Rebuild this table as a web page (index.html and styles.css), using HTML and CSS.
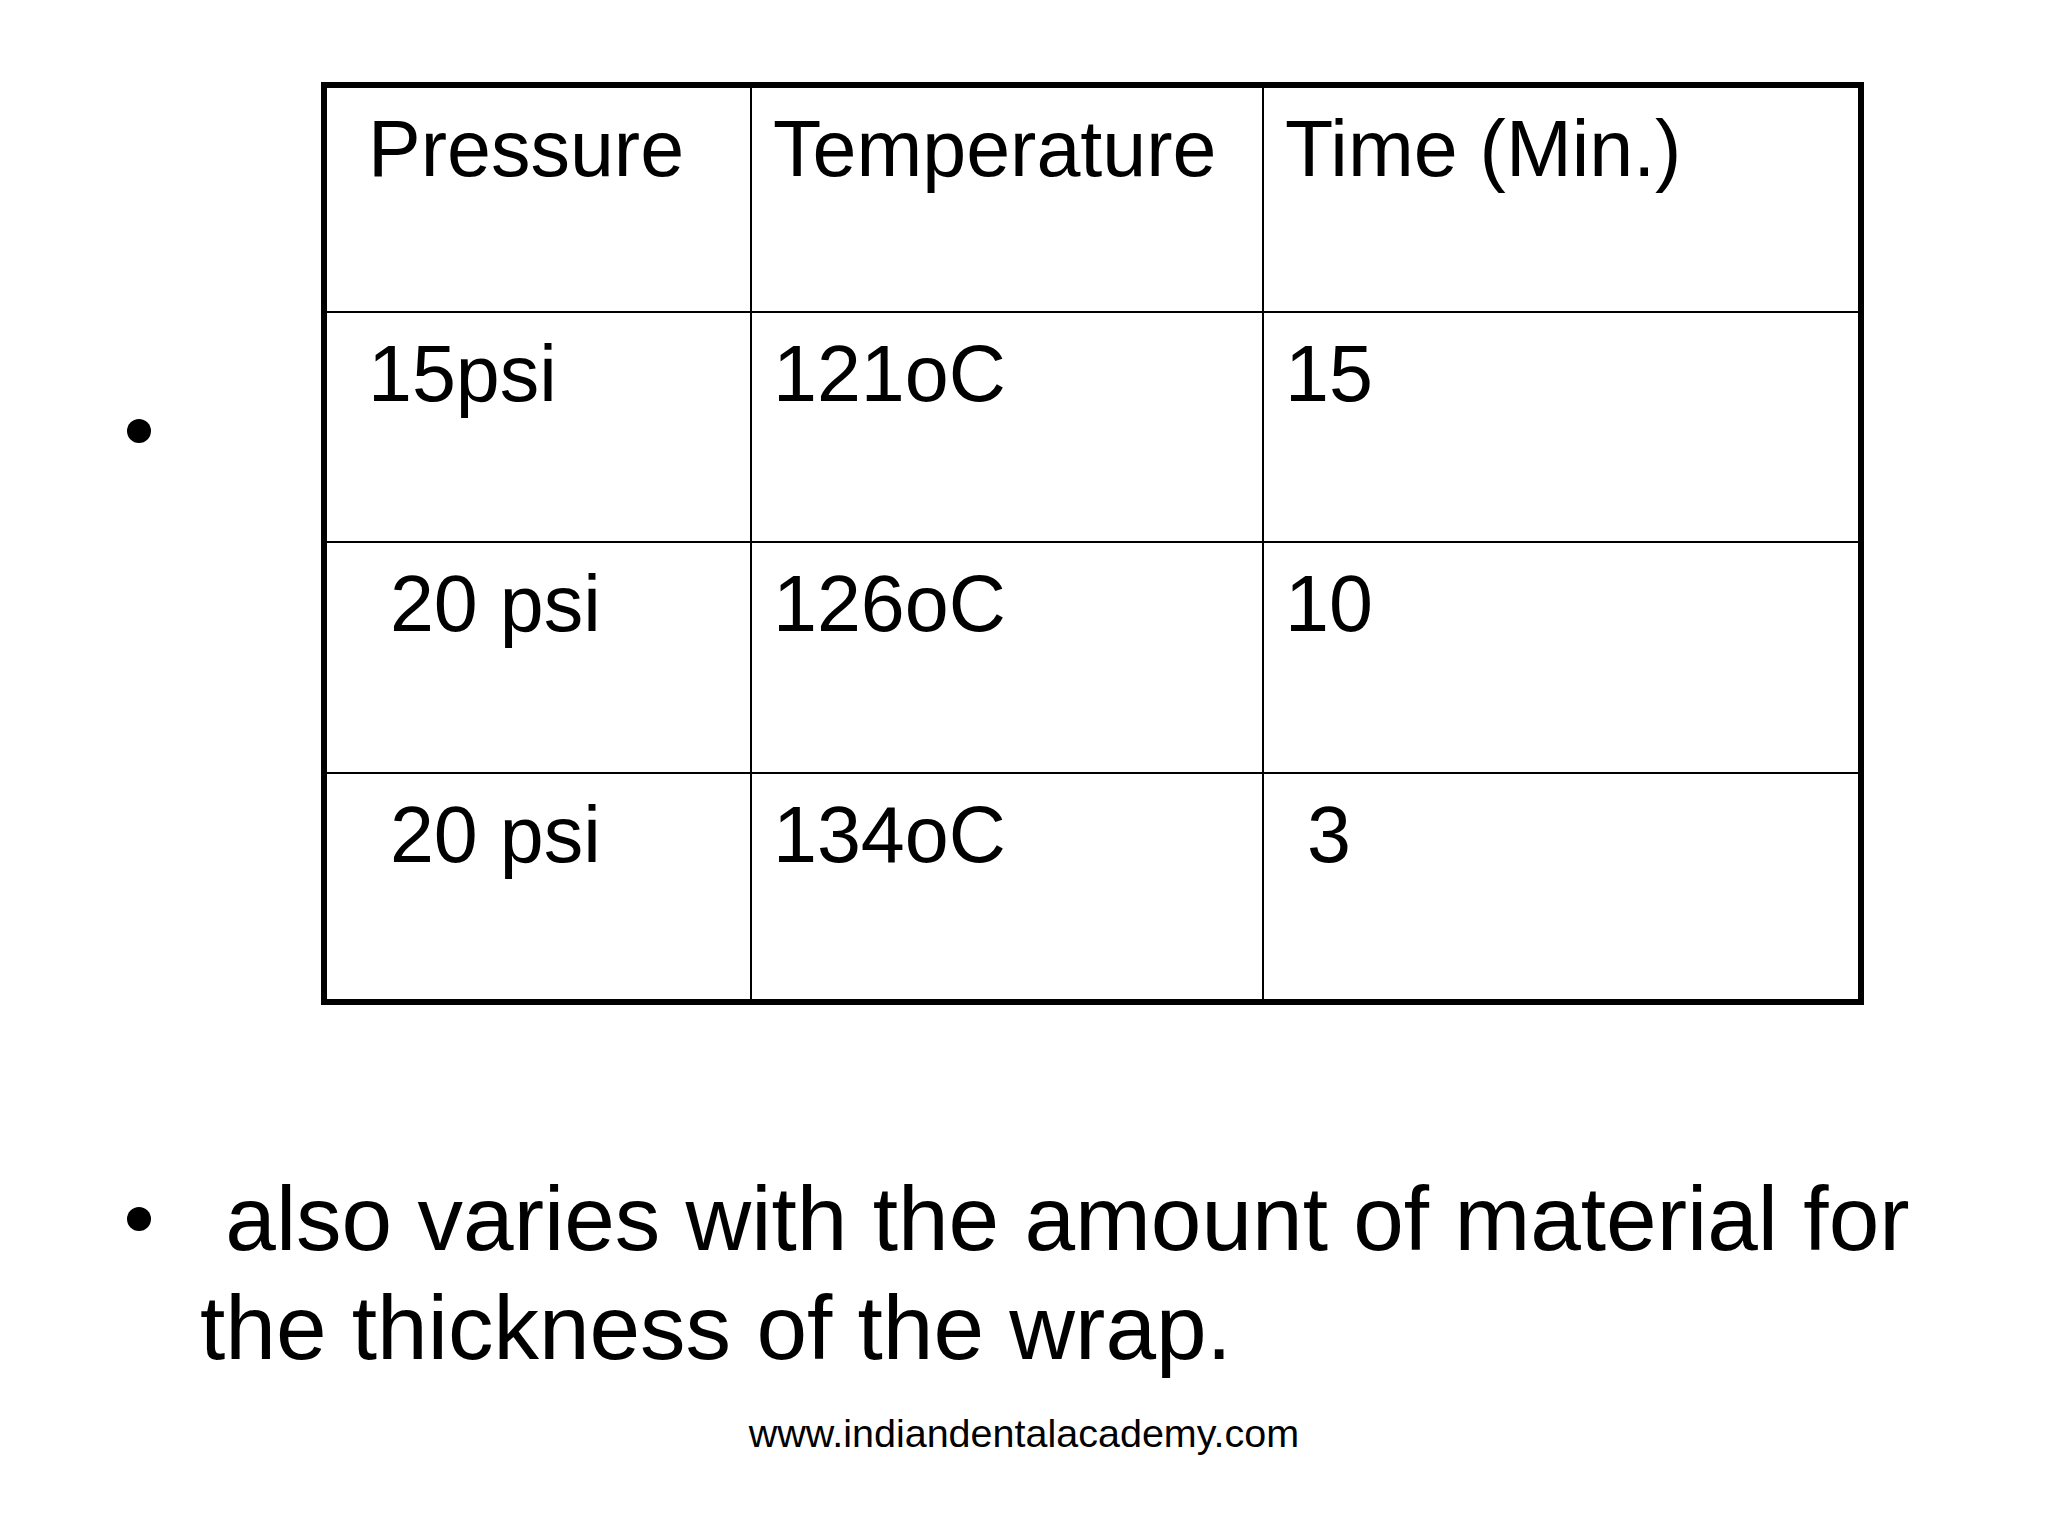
FILE: index.html
```html
<!DOCTYPE html>
<html lang="en">
<head>
<meta charset="utf-8">
<title>Sterilization table</title>
<link rel="stylesheet" href="styles.css">
</head>
<body>
<div class="slide">
  <div class="row-table">
    <span class="bullet bullet-empty"></span>
    <div class="grid">
      <div class="cell c1 r1"> Pressure</div>
      <div class="cell c2 r1">Temperature</div>
      <div class="cell c3 r1">Time (Min.)</div>
      <div class="cell c1 r2"> 15psi</div>
      <div class="cell c2 r2">121oC</div>
      <div class="cell c3 r2">15</div>
      <div class="cell c1 r3">  20 psi</div>
      <div class="cell c2 r3">126oC</div>
      <div class="cell c3 r3">10</div>
      <div class="cell c1 r4 last">  20 psi</div>
      <div class="cell c2 r4 last">134oC</div>
      <div class="cell c3 r4 last"> 3</div>
    </div>
  </div>
  <div class="point">
    <span class="bullet bullet-text"></span>
    <p class="point-text"> also varies with the amount of material for the thickness of the wrap.</p>
  </div>
  <div class="footer">www.indiandentalacademy.com</div>
</div>
</body>
</html>
```

FILE: styles.css
```css
html, body {
  margin: 0;
  padding: 0;
  background: #ffffff;
}

.slide {
  width: 2048px;
  height: 1536px;
  box-sizing: border-box;
  padding-top: 82px;
  background: #ffffff;
  color: #000000;
  font-family: "Liberation Sans", Arial, sans-serif;
  overflow: hidden;
}

.row-table {
  display: flex;
  align-items: flex-start;
}

.bullet {
  display: block;
  width: 24px;
  height: 24px;
  border-radius: 50%;
  background: #000000;
  flex: none;
  margin-left: 127px;
}

.bullet-empty {
  margin-top: 337px;
}

.grid {
  margin-left: 170px;
  border: 6px solid #000000;
  display: grid;
  grid-template-columns: 425px 512px 594px;
  grid-template-rows: 225px 230px 231px 225px;
}

.cell {
  font-size: 79px;
  line-height: normal;
  white-space: pre;
  padding: 15px 0 0 21px;
  border-right: 2px solid #000000;
  border-bottom: 2px solid #000000;
  box-sizing: border-box;
}

.c1 {
  padding-left: 19px;
}

.c3 {
  border-right: none;
}

.last {
  border-bottom: none;
}

.point {
  display: flex;
  align-items: flex-start;
  margin-top: 159px;
}

.bullet-text {
  margin-top: 43px;
}

.point-text {
  margin: 0 0 0 49px;
  width: 1740px;
  font-size: 91px;
  line-height: 109px;
  white-space: pre-wrap;
}

.footer {
  margin-top: 29px;
  text-align: center;
  font-size: 39.5px;
  line-height: normal;
}
```
